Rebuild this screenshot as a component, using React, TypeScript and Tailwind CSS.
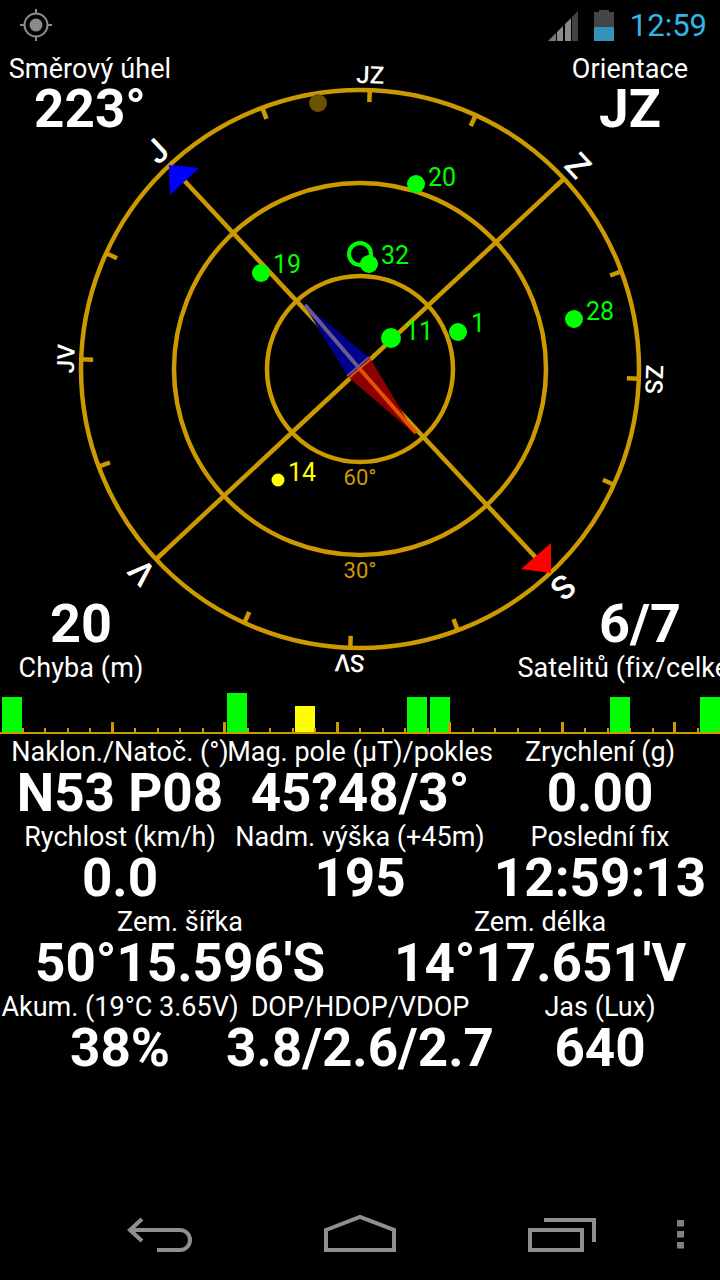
const GOLD = "#cc9900";
const CX = 360;
const CY = 369;

// bearing 0 = screen up, clockwise
const polar = (deg: number, r: number) => {
  const a = (deg * Math.PI) / 180;
  return { x: CX + r * Math.sin(a), y: CY - r * Math.cos(a) };
};

const compassLabels = [
  { text: "JZ", deg: 2, r: 294, size: 24 },
  { text: "Z", deg: 47, r: 298, size: 33 },
  { text: "ZS", deg: 92, r: 294, size: 24 },
  { text: "S", deg: 137, r: 298, size: 33 },
  { text: "SV", deg: 182, r: 294, size: 24 },
  { text: "V", deg: 227, r: 298, size: 33 },
  { text: "JV", deg: 272, r: 294, size: 24 },
  { text: "J", deg: 317, r: 298, size: 33 },
];

const sats = [
  { id: "20", x: 416, y: 184, r: 9, tx: 428, ty: 177, color: "#00ff00" },
  { id: "19", x: 261, y: 273, r: 9, tx: 273, ty: 264, color: "#00ff00" },
  { id: "32", x: 369, y: 264, r: 9, tx: 381, ty: 255, color: "#00ff00" },
  { id: "11", x: 391, y: 338, r: 10, tx: 405, ty: 331, color: "#00ff00" },
  { id: "1", x: 458, y: 332, r: 9, tx: 471, ty: 323, color: "#00ff00" },
  { id: "28", x: 574, y: 319, r: 9, tx: 586, ty: 311, color: "#00ff00" },
  { id: "14", x: 278, y: 480, r: 6.5, tx: 288, ty: 472, color: "#ffff00" },
];

const Compass = () => {
  const a = polar(317, 279);
  const b = polar(137, 279);
  const c = polar(47, 279);
  const d = polar(227, 279);
  return (
    <svg width="720" height="660" viewBox="0 50 720 660" className="block" style={{ fontFamily: "Roboto, sans-serif" }}>
      <g fill="none" stroke={GOLD} strokeWidth="4.5">
        <circle cx={CX} cy={CY} r="279" />
        <circle cx={CX} cy={CY} r="186" />
        <circle cx={CX} cy={CY} r="93" />
        <line x1={a.x} y1={a.y} x2={b.x} y2={b.y} />
        <line x1={c.x} y1={c.y} x2={d.x} y2={d.y} />
        {Array.from({ length: 16 }).map((_, i) => {
          const deg = 2 + i * 22.5;
          const p = polar(deg, 279);
          const q = polar(deg, 267);
          return <line key={i} x1={p.x} y1={p.y} x2={q.x} y2={q.y} />;
        })}
      </g>
      <polygon points="169,165 199,168 170,195" fill="#0000ff" />
      <polygon points="551,543 521,569 551,573" fill="#ff0000" />
      <polygon points="303,303 370,358 359,368 348,377" fill="#00008b" />
      <polygon points="416,435 370,358 359,368 348,377" fill="#8b0000" />
      <line x1="305" y1="305" x2="359" y2="368" stroke="#6a5a90" strokeWidth="4" />
      <line x1="359" y1="368" x2="416" y2="433" stroke="#e65000" strokeWidth="4" />
      <line x1="347" y1="376" x2="369" y2="357" stroke="#6a5a90" strokeWidth="2" />
      <line x1="349" y1="378" x2="371" y2="359" stroke="#e65000" strokeWidth="2" />
      <text x="360" y="485" textAnchor="middle" fontSize="22" fill={GOLD}>60°</text>
      <text x="360" y="578" textAnchor="middle" fontSize="22" fill={GOLD}>30°</text>
      {compassLabels.map((l) => {
        const p = polar(l.deg, l.r);
        return (
          <text
            key={l.text}
            x={p.x}
            y={p.y}
            transform={`rotate(${l.deg} ${p.x} ${p.y})`}
            textAnchor="middle"
            dominantBaseline="central"
            fontSize={l.size}
            fontWeight="500"
            fill="#ffffff"
          >
            {l.text}
          </text>
        );
      })}
      <circle cx="318" cy="103" r="9" fill="#6b5200" />
      <circle cx="360" cy="254" r="11" fill="none" stroke="#00ff00" strokeWidth="4" />
      {sats.map((s) => (
        <g key={s.id} fill={s.color}>
          <circle cx={s.x} cy={s.y} r={s.r} />
          <text x={s.tx} y={s.ty} fontSize="25" dominantBaseline="central">{s.id}</text>
        </g>
      ))}
    </svg>
  );
};

const Corner = ({ label, value, flip, className }: { label: string; value: string; flip?: boolean; className: string }) => (
  <div className={`absolute w-[300px] flex flex-col items-center whitespace-nowrap ${className}`}>
    {flip ? (
      <>
        <div className="text-[54px] leading-[58px] font-bold text-white">{value}</div>
        <div className="text-[27px] leading-[30px] tracking-[0.1px] text-white">{label}</div>
      </>
    ) : (
      <>
        <div className="h-[30px] text-[27px] leading-[32px] tracking-[0.1px] text-white">{label}</div>
        <div className="text-[53px] leading-[52px] font-bold text-white">{value}</div>
      </>
    )}
  </div>
);

const bars: Record<number, { h: number; color: string }> = {
  0: { h: 35, color: "bg-[#00ff00]" },
  10: { h: 39, color: "bg-[#00ff00]" },
  13: { h: 26, color: "bg-[#ffff00]" },
  18: { h: 35, color: "bg-[#00ff00]" },
  19: { h: 35, color: "bg-[#00ff00]" },
  27: { h: 35, color: "bg-[#00ff00]" },
  31: { h: 35, color: "bg-[#00ff00]" },
};

const SignalBars = () => (
  <div className="flex h-[44px] items-end border-b-2 border-[#cc9900]">
    {Array.from({ length: 32 }).map((_, i) => {
      const bar = bars[i];
      const major = (i + 1) % 5 === 0;
      return (
        <div key={i} className="relative flex h-full w-[22.5px] items-end pl-[2px]">
          {bar && <div className={`w-[20px] ${bar.color}`} style={{ height: bar.h }} />}
          <div className={`absolute bottom-0 right-[-1px] ${major ? "h-[10px] w-[3px]" : "h-[4px] w-[2px]"} bg-[#cc9900]`} />
        </div>
      );
    })}
  </div>
);

const Stat = ({ label, value }: { label: string; value: string }) => (
  <div className="flex flex-col items-center whitespace-nowrap">
    <div className="h-[30px] text-[27px] leading-[32px] text-white">{label}</div>
    <div className="text-[53px] leading-[55px] font-bold text-white">{value}</div>
  </div>
);

const StatusBar = () => (
  <div className="flex h-[50px] items-center justify-between pl-[20px] pr-[13px]">
    <svg width="32" height="32" viewBox="0 0 32 32" fill="none" stroke="#8a8a8a" strokeWidth="2">
      <circle cx="16" cy="16" r="11.5" />
      <circle cx="16" cy="16" r="6.5" fill="#8a8a8a" stroke="none" />
      <path d="M16 0v5M16 27v5M0 16h5M27 16h5" />
    </svg>
    <div className="flex items-center">
      <svg width="30" height="31" viewBox="0 0 30 31">
        <path d="M0 31 L8 23 V31Z" fill="#777" />
        <path d="M9 22 L15 16 V31 H9Z" fill="#8a8a8a" />
        <path d="M17 14 L23 8 V31 H17Z" fill="#8a8a8a" />
        <path d="M24 7 L30 1 V31 H24Z" fill="#444" />
      </svg>
      <svg className="ml-[16px]" width="20" height="31" viewBox="0 0 20 31">
        <path d="M5 0h10v2h5v15H0V2h5Z" fill="#444" />
        <rect y="17" width="20" height="14" fill="#3393b8" />
      </svg>
      <span className="ml-[16px] text-[31px] leading-none text-[#33b5e5]">12:59</span>
    </div>
  </div>
);

const NavBar = () => (
  <div className="absolute bottom-0 left-0 h-[96px] w-full">
    <svg width="720" height="96" viewBox="0 1184 720 96" fill="none" stroke="#8f8f8f" strokeWidth="4">
      <path d="M142 1219 L130 1230 L142 1241 M130 1230 H180 A10 10 0 0 1 180 1250 H157" />
      <path d="M326 1230 L360 1217 L394 1230 V1250 H326Z" />
      <path d="M530 1230 H582 V1250 H530Z M544 1220 H594 V1242" />
      <path d="M680.5 1220v6.5M680.5 1231v6.5M680.5 1242v6.5" strokeWidth="7" stroke="#808080" />
    </svg>
  </div>
);

export default function App() {
  return (
    <div className="relative h-[1280px] w-[720px] overflow-hidden bg-black" style={{ fontFamily: "Roboto, sans-serif" }}>
      <StatusBar />
      <div className="relative h-[645px]">
        <Compass />
        <Corner label="Směrový úhel" value="223°" className="left-[-60px] top-[3px]" />
        <Corner label="Orientace" value="JZ" className="left-[480px] top-[3px]" />
        <Corner label="Chyba (m)" value="20" flip className="left-[-69px] top-[545px]" />
        <Corner label="Satelitů (fix/celkem)" value="6/7" flip className="left-[490px] top-[545px]" />
      </div>
      <div className="mt-[-5px]">
        <SignalBars />
      </div>
      <div className="grid grid-cols-3 pt-[2px]">
        <Stat label="Naklon./Natoč. (°)" value="N53 P08" />
        <Stat label="Mag. pole (µT)/pokles" value="45?48/3°" />
        <Stat label="Zrychlení (g)" value="0.00" />
        <Stat label="Rychlost (km/h)" value="0.0" />
        <Stat label="Nadm. výška (+45m)" value="195" />
        <Stat label="Poslední fix" value="12:59:13" />
      </div>
      <div className="grid grid-cols-2">
        <Stat label="Zem. šířka" value="50°15.596'S" />
        <Stat label="Zem. délka" value="14°17.651'V" />
      </div>
      <div className="grid grid-cols-3">
        <Stat label="Akum. (19°C 3.65V)" value="38%" />
        <Stat label="DOP/HDOP/VDOP" value="3.8/2.6/2.7" />
        <Stat label="Jas (Lux)" value="640" />
      </div>
      <NavBar />
    </div>
  );
}
